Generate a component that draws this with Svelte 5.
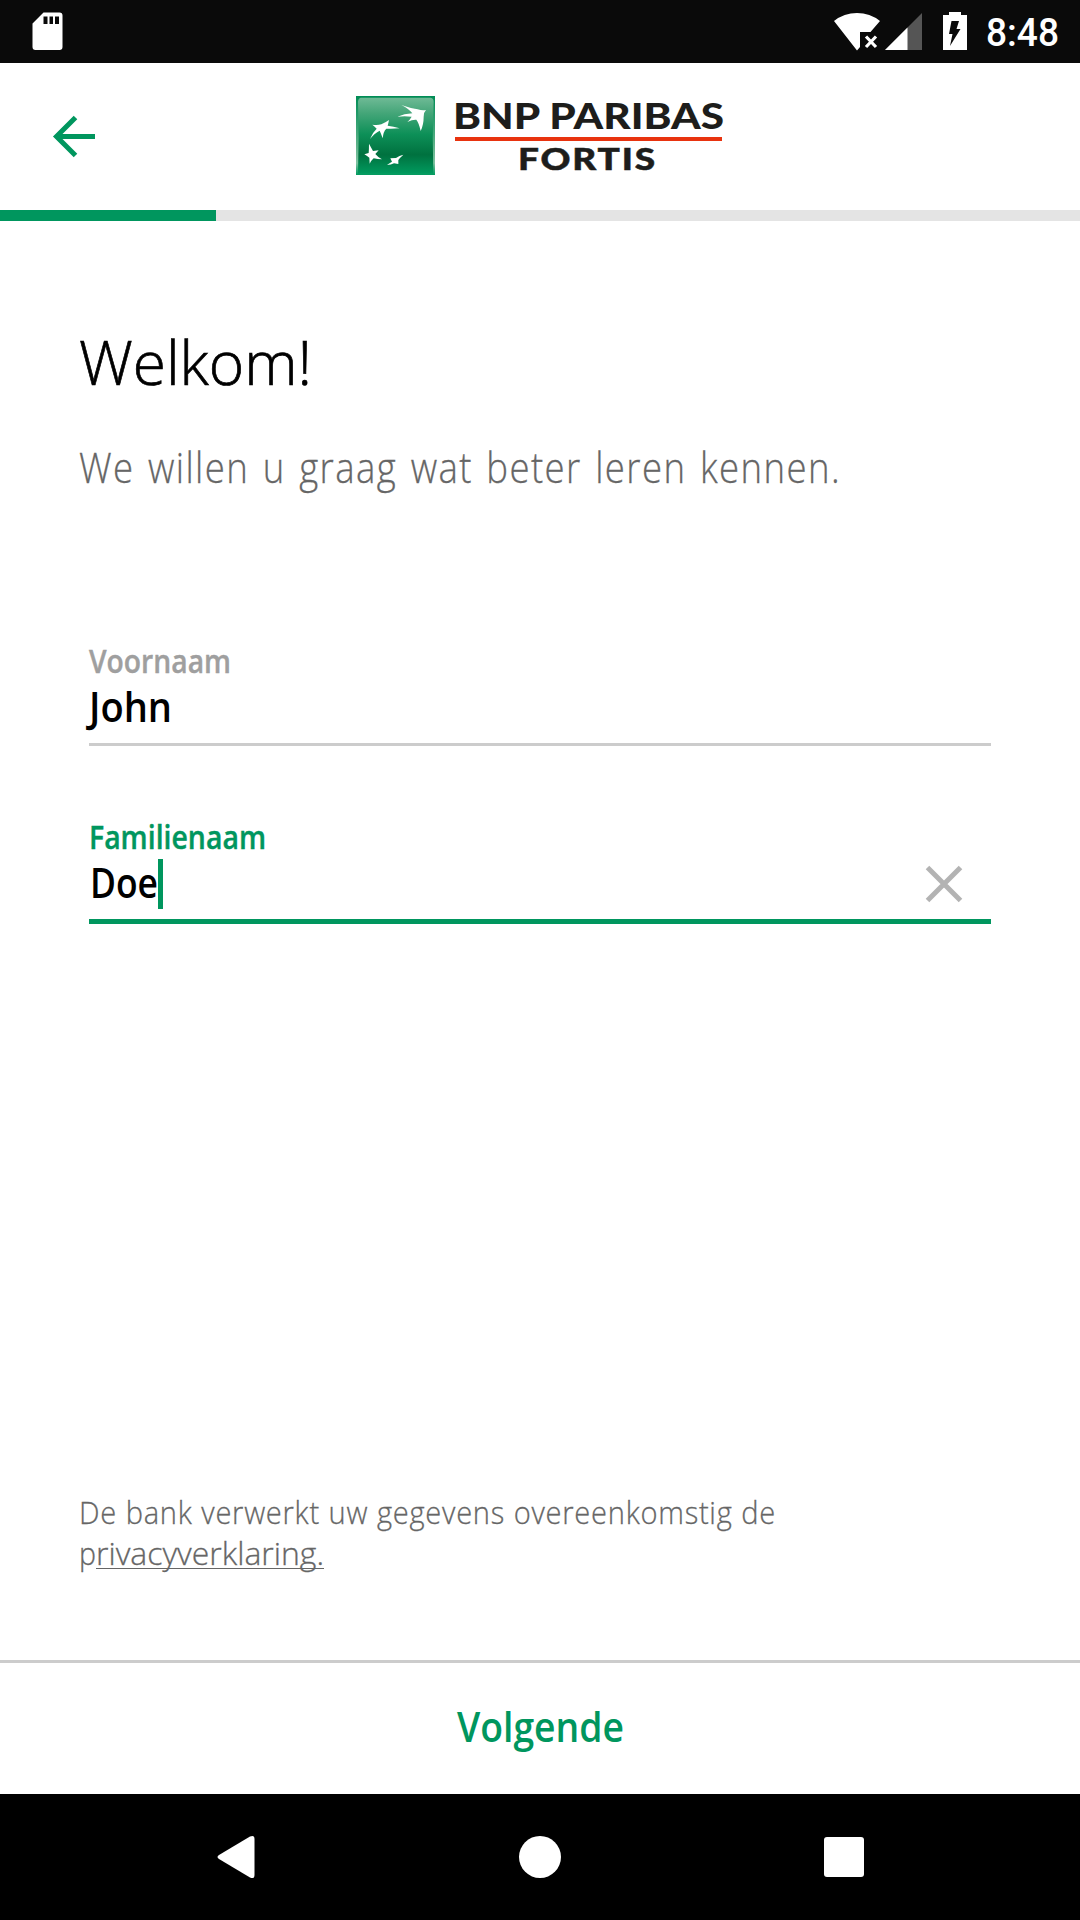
<script>
  const firstName = 'John';
  const lastName = 'Doe';
  const progress = 20;
</script>

{#snippet line(text, kind, size, width, height, base, x = 0)}
  <svg class="line {kind}" width={width + x} {height} font-size={size}>
    <text {x} y={base} textLength={width} lengthAdjust="spacingAndGlyphs">{text}</text>
  </svg>
{/snippet}

<div class="screen">
  <div class="status">
    <svg class="sd" width="31" height="39" viewBox="0 0 31 39">
      <path fill="#fff" fill-rule="evenodd" d="M11.5 .5H27.500a3 3 0 0 1 3 3V35a3 3 0 0 1-3 3H3.500a3 3 0 0 1-3-3V11.500ZM11.500 4.500V12H15.500V4.500ZM17.500 4.500V12H21V4.500ZM23 4.500V12H27V4.500Z" />
    </svg>
    <div class="indicators">
      <svg class="wifi" width="46" height="38" viewBox="0 0 46 38">
        <path fill="#fff" d="M0 8Q10 0 23 0T46 8L36.500 19H26V34L23 37.500Z" />
        <path stroke="#fff" stroke-width="3.200" d="M32 23.500 42 34M42 23.500 32 34" />
      </svg>
      <svg class="cell" width="37" height="37" viewBox="0 0 37 37">
        <path fill="#555" d="M37 0V37H0Z" />
        <path fill="#fff" d="M22.500 14.500V37H0Z" />
      </svg>
      <svg class="battery" width="24" height="38" viewBox="0 0 24 38">
        <path fill="#fff" d="M6 0H18V3H24V38H0V3H6Z" />
        <path fill="#0a0a0a" d="M8.500 9H16L13.500 17H17.500L7 34 9.500 22H6Z" />
      </svg>
      {@render line('8:48', 'clock', 38, 73, 63, 46)}
    </div>
  </div>

  <header>
    <svg class="back" width="42" height="42" viewBox="0 0 42 42">
      <path fill="none" stroke="#00965e" stroke-width="5" d="M42 21.500H4M22.500 2.500 3.500 21.500 22.500 40.500" />
    </svg>
    <div class="brand">
      <svg width="79" height="79" viewBox="33 33 237 237">
        <defs>
          <linearGradient id="face" x1="0" y1="0" x2="0" y2="1">
            <stop offset="0" stop-color="#6fba96" />
            <stop offset=".2" stop-color="#45a679" />
            <stop offset=".48" stop-color="#0d9058" />
            <stop offset=".75" stop-color="#00713f" />
            <stop offset="1" stop-color="#009a5e" />
          </linearGradient>
          <linearGradient id="edge" x1="0" y1="0" x2="0" y2="1">
            <stop offset="0" stop-color="#008c55" />
            <stop offset=".6" stop-color="#59b086" />
            <stop offset=".85" stop-color="#7fc3a1" />
            <stop offset="1" stop-color="#009a5e" />
          </linearGradient>
        </defs>
        <path fill="url(#edge)" d="M33 33H270V270H33Z" />
        <path fill="url(#face)" d="M47 38H257Q266 39 266 50Q261 160 265 266H39Q43 160 39 50Q40 39 47 38Z" />
        <g fill="#fff">
          <path d="M169 60Q194 69 218 73Q231 77 243 75Q235 83 236 95Q236 119 227 138Q222 114 214 104Q203 103 187 111Q195 104 200 95Q179 93 157 95Q178 86 202 85Q190 70 169 60Z" />
          <path d="M82 119Q97 121 109 118Q121 113 132 105Q130 115 128 122Q145 124 164 130Q144 132 124 131Q115 139 113 160Q108 145 104 137Q89 144 75 162Q82 143 95 131Q88 123 82 119Z" />
          <path d="M72 176Q78 187 84 198L101 196L91 207Q99 217 111 223Q98 223 86 220Q79 226 74 236L73 218Q65 212 58 208L71 204Q72 191 72 176Z" />
          <path d="M136 220L153 219Q163 212 175 209Q165 218 160 225L160 237L147 235Q138 240 126 240Q134 234 141 230Z" />
        </g>
      </svg>
      <div class="wordmark">
        {@render line('BNP PARIBAS', 'logo', 36, 271, 37, 30)}
        <div class="rule"></div>
        <div class="sub">{@render line('FORTIS', 'logo spaced', 30, 139, 34, 28.5)}</div>
      </div>
    </div>
  </header>

  <div class="track"><div class="bar" style:width="{progress}%"></div></div>

  <main>
    <h1>{@render line('Welkom!', 'title', 61, 233, 84, 64)}</h1>
    <p class="intro">{@render line('We willen u graag wat beter leren kennen.', 'grey wide', 42, 762, 60, 42.5)}</p>

    <div class="field">
      {@render line('Voornaam', 'label', 32, 142, 40, 31)}
      <div class="value">{@render line(firstName, 'entry', 42, 83, 50, 40)}</div>
    </div>

    <div class="field active">
      {@render line('Familienaam', 'label', 32, 177, 40, 31)}
      <div class="value">
        {@render line(lastName, 'entry', 42, 68, 50, 40, 1)}
        <i class="caret"></i>
        <svg class="clear" width="36" height="36" viewBox="0 0 36 36">
          <path stroke="#b3b3b3" stroke-width="5" d="M1.500 1.500 34.500 34.500M34.500 1.500 1.500 34.500" />
        </svg>
      </div>
    </div>

    <div class="legal">
      {@render line('De bank verwerkt uw gegevens overeenkomstig de', 'grey small', 31.5, 697, 41, 31)}
      <div class="row">
        {@render line('p', 'grey', 31.5, 17, 41, 31)}
        <span class="link">{@render line('rivacyverklaring.', 'grey', 31.5, 228, 41, 31)}</span>
      </div>
    </div>
  </main>

  <div class="next">{@render line('Volgende', 'action', 42, 167, 131, 79)}</div>

  <nav>
    <svg width="38" height="42" viewBox="0 0 38 42">
      <path fill="#fff" d="M33 .5Q37.500-1.500 37.500 3V39Q37.500 43.500 33 41.500L2 23Q-1 21 2 19Z" />
    </svg>
    <i class="home"></i>
    <i class="recent"></i>
  </nav>
</div>

<style>
  :global(body) {
    background: #fff;
  }
  .screen {
    width: 1080px;
    height: 1920px;
    display: flex;
    flex-direction: column;
    background: #fff;
    font-family: 'Open Sans', 'Noto Sans', sans-serif;
  }
  svg {
    display: block;
    flex: none;
    overflow: visible;
  }
  .status {
    height: 63px;
    background: #0a0a0a;
    display: flex;
    justify-content: space-between;
    padding: 0 21px 0 32px;
  }
  .sd {
    margin-top: 12px;
  }
  .indicators {
    display: flex;
    height: 63px;
  }
  .wifi {
    margin-top: 13px;
  }
  .cell {
    margin: 13px 21px 0 5px;
  }
  .battery {
    margin: 12px 19px 0 0;
  }
  .clock {
    font-family: Roboto, sans-serif;
    font-weight: 500;
    fill: #fff;
  }
  header {
    height: 147px;
    display: flex;
    align-items: flex-start;
    padding-left: 53px;
  }
  .back {
    margin-top: 52px;
  }
  .brand {
    display: flex;
    gap: 18px;
    margin: 33px 0 0 261px;
  }
  .wordmark {
    display: flex;
    flex-direction: column;
    padding-top: 3px;
  }
  .rule {
    width: 267px;
    height: 4px;
    margin: 1px 0 0 2px;
    background: #e8330f;
  }
  .sub {
    padding-left: 65px;
  }
  .logo {
    font-family: Lato, sans-serif;
    font-weight: 900;
    fill: #1d1d1b;
  }
  .spaced {
    letter-spacing: 1.5px;
    stroke: #1d1d1b;
    stroke-width: 0.5px;
  }
  .track {
    height: 11px;
    background: #e4e4e4;
  }
  .bar {
    height: 11px;
    background: #00965e;
  }
  main {
    flex: 1;
    display: flex;
    flex-direction: column;
    padding: 100px 89px 0 79px;
  }
  h1,
  p {
    margin: 0;
  }
  .title {
    font-weight: 300;
    fill: #000;
    stroke: #000;
    stroke-width: 0.7px;
  }
  .intro {
    padding-top: 35px;
  }
  .grey {
    font-weight: 300;
    fill: #666;
    stroke: #666;
    stroke-width: 0.3px;
  }
  .wide {
    word-spacing: 3px;
    letter-spacing: 1.6px;
  }
  .small {
    word-spacing: 0.5px;
    letter-spacing: 0.8px;
  }
  .field {
    margin: 142px 0 0 10px;
    border-bottom: 3px solid #ccc;
    height: 101px;
  }
  .field.active {
    margin-top: 72px;
    border-bottom: 5px solid #00965e;
  }
  .label {
    font-weight: 600;
    fill: #9f9f9f;
    stroke: #9f9f9f;
    stroke-width: 0.4px;
  }
  .active .label {
    fill: #00965e;
    stroke: #00965e;
  }
  .entry,
  .action {
    font-weight: 600;
    fill: #000;
  }
  .value {
    display: flex;
    height: 50px;
  }
  .caret {
    width: 5px;
    height: 50px;
    margin-top: 1px;
    background: #00965e;
  }
  .clear {
    margin: 8px 29.5px 0 auto;
  }
  .legal {
    margin-top: auto;
    padding-bottom: 85px;
  }
  .row {
    display: flex;
  }
  .link {
    height: 34px;
    border-bottom: 1px solid #666;
  }
  .next {
    height: 131px;
    border-top: 3px solid #ccc;
    display: flex;
    justify-content: center;
  }
  .action {
    fill: #00965e;
  }
  nav {
    height: 126px;
    background: #000;
    display: flex;
    align-items: center;
    justify-content: space-between;
    padding: 0 216px 0 217px;
  }
  .home {
    width: 42px;
    height: 42px;
    border-radius: 50%;
    background: #fff;
  }
  .recent {
    width: 40px;
    height: 40px;
    border-radius: 3px;
    background: #fff;
  }
</style>
